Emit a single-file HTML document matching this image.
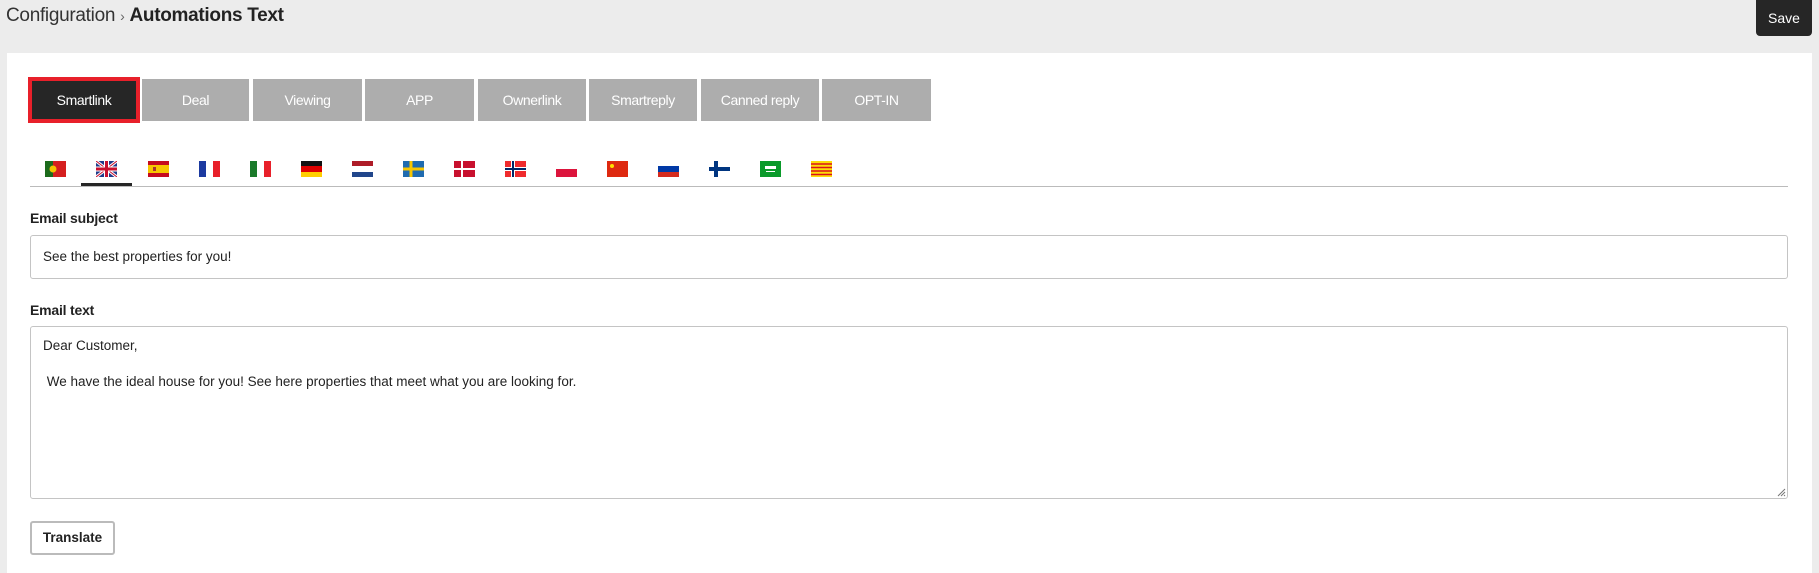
<!DOCTYPE html>
<html><head><meta charset="utf-8"><style>
*{box-sizing:border-box;margin:0;padding:0}
body{width:1819px;height:573px;background:#ececec;font-family:"Liberation Sans",sans-serif;position:relative;overflow:hidden;color:#222}
.abs{position:absolute}
.title{left:6px;top:5px;font-size:19px;color:#333;letter-spacing:-0.3px}
.title b{color:#222}
.save{left:1756px;top:0;width:56px;height:36px;background:#262626;color:#fff;border-radius:0 0 4px 4px;font-size:14px;text-align:center;line-height:36px}
.panel{left:7px;top:53px;width:1805px;height:520px;background:#fff}
.tab{position:absolute;top:79px;height:42px;background:#adadad;color:#fff;font-size:14px;text-align:center;line-height:42px;letter-spacing:-0.4px}
.tab.act{background:#262626;border:4px solid #e8202a;line-height:38px}
.flag{position:absolute;top:161px;width:21px;height:16px}
.lbl{font-size:14px;font-weight:bold;left:30px;letter-spacing:-0.2px}
.box{left:30px;width:1758px;border:1px solid #c4c4c4;border-radius:3px;background:#fff;font-size:13.5px;color:#222}
</style></head><body>
<div class="abs title">Configuration <span style="font-size:14px;color:#666">&rsaquo;</span> <b>Automations Text</b></div>
<div class="abs save">Save</div>
<div class="abs panel"></div>
<div class="tab act" style="left:28px;width:112px;top:77px;height:46px">Smartlink</div>
<div class="tab" style="left:142px;width:107px">Deal</div>
<div class="tab" style="left:253px;width:109px">Viewing</div>
<div class="tab" style="left:365px;width:109px">APP</div>
<div class="tab" style="left:478px;width:108px">Ownerlink</div>
<div class="tab" style="left:589px;width:108px">Smartreply</div>
<div class="tab" style="left:701px;width:118px">Canned reply</div>
<div class="tab" style="left:822px;width:109px">OPT-IN</div>

<svg class="flag" style="left:45px" viewBox="0 0 21 16"><rect width="21" height="16" fill="#d51f1f"/><rect width="8" height="16" fill="#1c6b1c"/><circle cx="8" cy="8" r="3.5" fill="#f3c300"/></svg>
<svg class="flag" style="left:96px" viewBox="0 0 21 16"><rect width="21" height="16" fill="#1f3a8a"/><path d="M0 0L21 16M21 0L0 16" stroke="#fff" stroke-width="3"/><path d="M0 0L21 16M21 0L0 16" stroke="#c8102e" stroke-width="1"/><path d="M10.5 0V16M0 8H21" stroke="#fff" stroke-width="5"/><path d="M10.5 0V16M0 8H21" stroke="#c8102e" stroke-width="3"/></svg>
<svg class="flag" style="left:148px" viewBox="0 0 21 16"><rect width="21" height="16" fill="#c60b1e"/><rect y="4" width="21" height="8" fill="#f7c600"/><rect x="5" y="6" width="3" height="4" fill="#a33"/></svg>
<svg class="flag" style="left:199px" viewBox="0 0 21 16"><rect width="7" height="16" fill="#1c3aa0"/><rect x="7" width="7" height="16" fill="#fff"/><rect x="14" width="7" height="16" fill="#e8202a"/></svg>
<svg class="flag" style="left:250px" viewBox="0 0 21 16"><rect width="7" height="16" fill="#1a7a2a"/><rect x="7" width="7" height="16" fill="#fff"/><rect x="14" width="7" height="16" fill="#e8202a"/></svg>
<svg class="flag" style="left:301px" viewBox="0 0 21 16"><rect width="21" height="6" fill="#111"/><rect y="5" width="21" height="6" fill="#dd0000"/><rect y="11" width="21" height="5" fill="#ffce00"/></svg>
<svg class="flag" style="left:352px" viewBox="0 0 21 16"><rect width="21" height="6" fill="#ae1c28"/><rect y="5" width="21" height="6" fill="#fff"/><rect y="11" width="21" height="5" fill="#21468b"/></svg>
<svg class="flag" style="left:403px" viewBox="0 0 21 16"><rect width="21" height="16" fill="#1f6bb0"/><path d="M0 8H21M8 0V16" stroke="#f7c600" stroke-width="3"/></svg>
<svg class="flag" style="left:454px" viewBox="0 0 21 16"><rect width="21" height="16" fill="#c8102e"/><path d="M0 8H21M8 0V16" stroke="#fff" stroke-width="2"/></svg>
<svg class="flag" style="left:505px" viewBox="0 0 21 16"><rect width="21" height="16" fill="#ef2b2d"/><path d="M0 8H21M8 0V16" stroke="#fff" stroke-width="4"/><path d="M0 8H21M8 0V16" stroke="#002868" stroke-width="2"/></svg>
<svg class="flag" style="left:556px" viewBox="0 0 21 16"><rect width="21" height="8" fill="#fff"/><rect y="8" width="21" height="8" fill="#dc143c"/></svg>
<svg class="flag" style="left:607px" viewBox="0 0 21 16"><rect width="21" height="16" fill="#de2910"/><circle cx="5" cy="5" r="2" fill="#ffde00"/></svg>
<svg class="flag" style="left:658px" viewBox="0 0 21 16"><rect width="21" height="6" fill="#fff"/><rect y="5" width="21" height="6" fill="#0039a6"/><rect y="11" width="21" height="5" fill="#d52b1e"/></svg>
<svg class="flag" style="left:709px" viewBox="0 0 21 16"><rect width="21" height="16" fill="#fff"/><path d="M0 8H21M7 0V16" stroke="#003580" stroke-width="4"/></svg>
<svg class="flag" style="left:760px" viewBox="0 0 21 16"><rect width="21" height="16" fill="#0a9a2a"/><rect x="5" y="5" width="11" height="3" fill="#fff"/><rect x="6" y="10" width="9" height="1" fill="#fff"/></svg>
<svg class="flag" style="left:811px" viewBox="0 0 21 16"><rect width="21" height="16" fill="#fcdd09"/><path d="M0 3H21M0 6.5H21M0 10H21M0 13.5H21" stroke="#da121a" stroke-width="1.6"/></svg>

<div class="abs" style="left:30px;top:186px;width:1758px;height:1px;background:#bbb"></div>
<div class="abs" style="left:81px;top:183px;width:51px;height:3px;background:#262626"></div>

<div class="abs lbl" style="top:210px">Email subject</div>
<div class="abs box" style="top:235px;height:44px;padding:13px 12px">See the best properties for you!</div>
<div class="abs lbl" style="top:302px">Email text</div>
<div class="abs box" style="top:326px;height:173px;padding:10px 12px;line-height:18px">Dear Customer,<br><br>&nbsp;We have the ideal house for you! See here properties that meet what you are looking for.</div>
<svg class="abs" style="left:1777px;top:488px" width="9" height="9"><path d="M1 8L8 1M4 8L8 4M7 8L8 7" stroke="#777" stroke-width="1"/></svg>
<div class="abs" style="left:30px;top:521px;width:85px;height:34px;border:2px solid #bbb;border-radius:3px;font-size:13.5px;font-weight:bold;text-align:center;line-height:30px">Translate</div>
</body></html>
